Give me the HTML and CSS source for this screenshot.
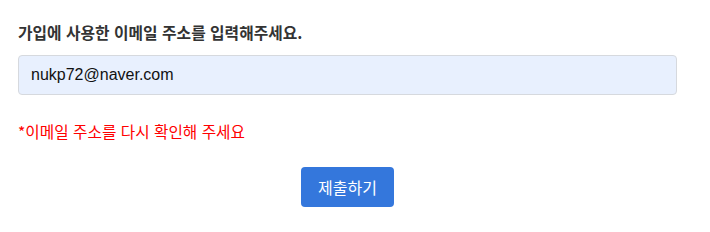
FILE: index.html
```html
<!DOCTYPE html>
<html lang="ko">
<head>
    <meta charset="UTF-8">
    <title>이메일 확인</title>
    <link rel="stylesheet" href="styles.css">
</head>
<body>
    <form class="email-form">
        <label for="email" class="email-label">가입에 사용한 이메일 주소를 입력해주세요.</label>
        <input type="text" id="email" class="email-input" value="nukp72@naver.com">
        <p class="error-msg">*이메일 주소를 다시 확인해 주세요</p>
        <div class="btn-row">
            <button type="button" class="btn">제출하기</button>
        </div>
    </form>
</body>
</html>
```

FILE: styles.css
```css
body {
    margin: 0;
    padding: 0;
    background: #fff;
    font-family: "Noto Sans CJK KR", "Noto Sans", sans-serif;
}
.email-form {
    width: 659px;
    padding: 22px 0 0 18px;
}
.email-label {
    display: block;
    font-size: 15.8px;
    font-weight: bold;
    color: #333;
    line-height: 22px;
    margin-bottom: 11px;
}
.email-input {
    display: block;
    box-sizing: border-box;
    width: 100%;
    height: 40px;
    padding: 0 12px;
    font-family: "Liberation Sans", "Noto Sans CJK KR", sans-serif;
    font-size: 16px;
    color: #111;
    background: #e8f0fe;
    border: 1px solid #d6d9de;
    border-radius: 4px;
}
.error-msg {
    margin: 26px 0 0;
    font-size: 15.7px;
    line-height: 22px;
    color: #ff0000;
}
.btn-row {
    display: flex;
    justify-content: center;
    margin-top: 24px;
}
.btn {
    width: 93px;
    height: 40px;
    font-family: inherit;
    font-size: 16px;
    color: #fff;
    background: #3477dc;
    border: none;
    border-radius: 4px;
}
```
